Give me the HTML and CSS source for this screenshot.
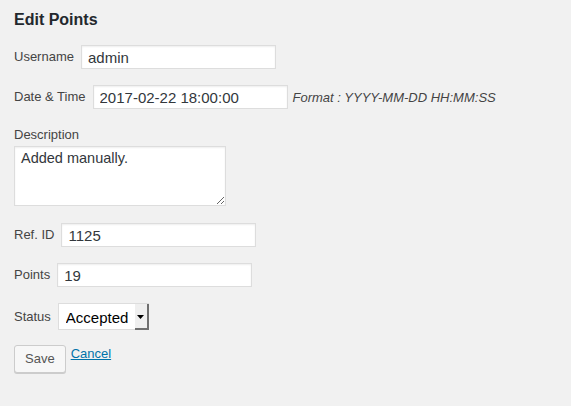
FILE: index.html
```html
<!DOCTYPE html>
<html lang="en">
<head>
<meta charset="utf-8">
<title>Edit Points</title>
<link rel="stylesheet" href="styles.css">
</head>
<body>
<div class="wrap">
  <h2 class="title">Edit Points</h2>
  <form class="form" onsubmit="return false">
    <div class="row">
      <label class="label" for="user">Username</label>
      <input class="field" id="user" type="text" value="admin">
    </div>
    <div class="row">
      <label class="label" for="date">Date &amp; Time</label>
      <input class="field" id="date" type="text" value="2017-02-22 18:00:00">
      <span class="hint">Format : YYYY-MM-DD HH:MM:SS</span>
    </div>
    <div class="stack">
      <label class="label" for="desc">Description</label>
      <textarea class="area" id="desc">Added manually.</textarea>
    </div>
    <div class="row row-ref">
      <label class="label" for="ref">Ref. ID</label>
      <input class="field" id="ref" type="text" value="1125">
    </div>
    <div class="row">
      <label class="label" for="pts">Points</label>
      <input class="field" id="pts" type="text" value="19">
    </div>
    <div class="row">
      <label class="label" for="status">Status</label>
      <span class="select">
        <select class="select-input" id="status">
          <option selected>Accepted</option>
          <option>Pending</option>
          <option>Rejected</option>
        </select>
        <span class="select-arrow"><svg width="7" height="4" viewBox="0 0 7 4"><path d="M0 0H7L3.5 4Z" fill="#000"/></svg></span>
      </span>
    </div>
    <div class="actions">
      <button class="button" type="submit">Save</button>
      <a class="cancel" href="#">Cancel</a>
    </div>
  </form>
</div>
</body>
</html>
```

FILE: styles.css
```css
html, body {
  margin: 0;
  padding: 0;
  background: #f1f1f1;
}

body {
  font-family: "Liberation Sans", Arial, sans-serif;
  font-size: 13px;
  color: #444;
}

.wrap {
  padding: 10px 14px 20px 14px;
}

.title {
  margin: 0;
  font-size: 16px;
  line-height: 20px;
  font-weight: 700;
  color: #23282d;
}

.form {
  display: flex;
  flex-direction: column;
  align-items: flex-start;
  gap: 16px;
  margin: 15px 0 0 0;
}

.row {
  display: flex;
  align-items: center;
}

.label {
  font-size: 13px;
  line-height: 16px;
  color: #444;
  margin-right: 7px;
}

.field {
  box-sizing: border-box;
  width: 195px;
  height: 24px;
  margin: 0;
  padding: 1px 6px 0;
  border: 1px solid #ddd;
  background: #fff;
  box-shadow: inset 0 1px 2px rgba(0, 0, 0, 0.07);
  font-family: "Liberation Sans", Arial, sans-serif;
  font-size: 15px;
  color: #32373c;
  outline: none;
}

.hint {
  margin-left: 5px;
  font-style: italic;
  font-size: 13px;
  color: #444;
}

.stack {
  display: flex;
  flex-direction: column;
  align-items: flex-start;
  margin-top: 2px;
}

.stack .label {
  margin: 0 0 3px 0;
}

.area {
  box-sizing: border-box;
  width: 212px;
  height: 60px;
  margin: 0;
  padding: 2px 6px;
  border: 1px solid #ddd;
  background: #fff;
  box-shadow: inset 0 1px 2px rgba(0, 0, 0, 0.07);
  font-family: "Liberation Sans", Arial, sans-serif;
  font-size: 14.5px;
  line-height: 19.6px;
  color: #32373c;
  outline: none;
}

.row-ref {
  margin-top: 1px;
}

.select {
  box-sizing: border-box;
  display: inline-flex;
  align-items: stretch;
  width: 91px;
  height: 27px;
  border: 1px solid #ddd;
  background: #fff;
}

.select-input {
  -webkit-appearance: none;
  appearance: none;
  flex: 1;
  min-width: 0;
  margin: 0;
  padding: 1px 0 0 7px;
  border: none;
  background: transparent;
  font-family: "Liberation Sans", Arial, sans-serif;
  font-size: 15px;
  color: #000;
  outline: none;
}

.select-arrow {
  box-sizing: border-box;
  width: 14px;
  display: flex;
  align-items: center;
  justify-content: center;
  background: #efefef;
  border-right: 2px solid #6f6f6f;
  border-bottom: 2px solid #6f6f6f;
  margin-right: -1px;
  margin-bottom: -1px;
  padding-top: 1px;
}

.actions {
  display: flex;
  align-items: flex-start;
  margin-top: -1px;
}

.button {
  box-sizing: border-box;
  height: 28px;
  margin: 0;
  padding: 0 10px 1px;
  border: 1px solid #ccc;
  border-radius: 3px;
  background: #f7f7f7;
  box-shadow: 0 1px 0 #ccc;
  font-family: "Liberation Sans", Arial, sans-serif;
  font-size: 13px;
  color: #555;
  cursor: pointer;
}

.cancel {
  margin-left: 5px;
  font-size: 13px;
  line-height: 18px;
  color: #0073aa;
  text-decoration: underline;
}
```
